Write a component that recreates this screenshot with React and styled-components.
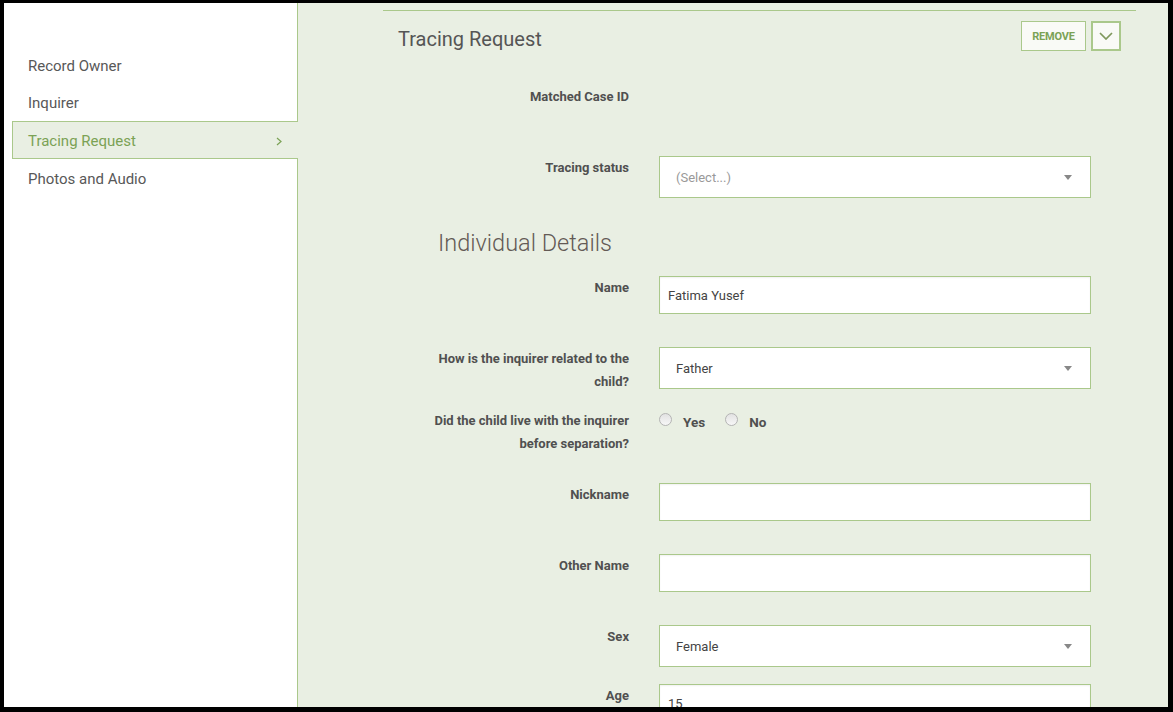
import React from "react";
import styled, { createGlobalStyle } from "styled-components";

const Global = createGlobalStyle`
  html, body { margin: 0; padding: 0; background: #000; }
  body { font-family: Roboto, "Noto Sans", Arial, sans-serif; }
  * { box-sizing: border-box; }
`;

const GREEN = "#aac88b";
const GREEN_TEXT = "#7ba255";
const BG = "#e9efe3";

const Frame = styled.div`
  width: 1173px;
  height: 712px;
  border-style: solid;
  border-color: #000;
  border-width: 3px 5px 5px 4px;
  display: flex;
  overflow: hidden;
  background: ${BG};
`;

const Sidebar = styled.nav`
  width: 294px;
  flex: none;
  background: #fff;
  border-right: 1px solid ${GREEN};
  padding: 43px 0 0 8px;
  display: flex;
  flex-direction: column;
`;

const NavItem = styled.div`
  height: ${(p) => (p.$first ? 37 : 38)}px;
  display: flex;
  align-items: center;
  justify-content: space-between;
  padding: 2px 16px 0 15px;
  font-size: 15px;
  color: ${(p) => (p.$active ? GREEN_TEXT : "#585858")};
  background: ${(p) => (p.$active ? BG : "transparent")};
  border: 1px solid ${(p) => (p.$active ? GREEN : "transparent")};
  border-right: none;
  margin-right: -1px;
`;

const Main = styled.main`
  flex: 1;
  padding: 7px 32px 0 85px;
  overflow: hidden;
`;

const Panel = styled.section`
  border-top: 1px solid ${GREEN};
`;

const Header = styled.div`
  display: flex;
  justify-content: space-between;
  align-items: flex-start;
  padding: 10px 15px 0 15px;
  height: 74px;
`;

const Title = styled.h2`
  margin: 3px 0 0;
  font-size: 20px;
  font-weight: 400;
  line-height: 30px;
  color: #555;
`;

const Actions = styled.div`
  display: flex;
  gap: 5px;
`;

const RemoveButton = styled.button`
  height: 30px;
  width: 65px;
  background: #f9faf6;
  border: 1px solid ${GREEN};
  color: ${GREEN_TEXT};
  font-family: Roboto, Arial, sans-serif;
  font-weight: 700;
  font-size: 11px;
  letter-spacing: -0.2px;
  padding: 0;
`;

const CollapseButton = styled.button`
  width: 30px;
  height: 30px;
  background: #f9faf6;
  border: 2px solid ${GREEN};
  display: flex;
  align-items: center;
  justify-content: center;
  padding: 0;
`;

const Row = styled.div`
  display: grid;
  grid-template-columns: 198px 432px;
  column-gap: 30px;
  padding-left: 48px;
  height: ${(p) => p.$h}px;
  align-items: start;
`;

const Label = styled.div`
  text-align: right;
  font-weight: 700;
  font-size: 13px;
  line-height: 23px;
  color: #505050;
`;

const TextBox = styled.div`
  height: 38px;
  background: #fff;
  border: 1px solid ${GREEN};
  box-shadow: inset 0 1px 2px rgba(0, 0, 0, 0.06);
  display: flex;
  align-items: center;
  padding: 0 8px;
  font-size: 13px;
  color: #444;
`;

const SelectBox = styled.div`
  height: 42px;
  background: #fff;
  border: 1px solid ${GREEN};
  display: flex;
  align-items: center;
  justify-content: space-between;
  padding: 0 18px 0 16px;
  font-size: 13px;
  color: ${(p) => (p.$placeholder ? "#999" : "#444")};
`;

const Caret = styled.span`
  width: 0;
  height: 0;
  border-left: 4px solid transparent;
  border-right: 4px solid transparent;
  border-top: 5px solid #888;
`;

const SectionHeading = styled.h3`
  margin: 0 0 0 55px;
  height: 49px;
  font-size: 23.5px;
  font-weight: 300;
  line-height: 32px;
  color: #635a55;
`;

const RadioGroup = styled.div`
  display: flex;
  align-items: center;
  height: 23px;
  gap: 20px;
`;

const RadioOption = styled.label`
  display: flex;
  align-items: center;
  gap: 11px;
  font-size: 13.5px;
  font-weight: 700;
  color: #505050;
  padding-top: 3px;
`;

const RadioCircle = styled.span`
  width: 13px;
  height: 13px;
  border-radius: 50%;
  border: 1px solid #b4b4b4;
  background: linear-gradient(#e2e2e2, #f7f7f7);
  margin-top: -6px;
`;

const fields = [
  { type: "empty", label: "Matched Case ID", h: 71 },
  { type: "select", label: "Tracing status", value: "(Select...)", placeholder: true, h: 71 },
  { type: "heading", label: "Individual Details" },
  { type: "text", label: "Name", value: "Fatima Yusef", h: 71 },
  { type: "select", label: "How is the inquirer related to the child?", value: "Father", h: 62 },
  { type: "radio", label: "Did the child live with the inquirer before separation?", options: ["Yes", "No"], h: 74 },
  { type: "text", label: "Nickname", value: "", h: 71 },
  { type: "text", label: "Other Name", value: "", h: 71 },
  { type: "select", label: "Sex", value: "Female", h: 59 },
  { type: "text", label: "Age", value: "15", h: 60 },
];

function Control({ f }) {
  if (f.type === "text") return <TextBox>{f.value}</TextBox>;
  if (f.type === "select")
    return (
      <SelectBox $placeholder={f.placeholder}>
        <span>{f.value}</span>
        <Caret />
      </SelectBox>
    );
  if (f.type === "radio")
    return (
      <RadioGroup>
        {f.options.map((o) => (
          <RadioOption key={o}>
            <RadioCircle />
            {o}
          </RadioOption>
        ))}
      </RadioGroup>
    );
  return <div />;
}

export default function App() {
  return (
    <>
      <Global />
      <Frame>
        <Sidebar>
          <NavItem $first>Record Owner</NavItem>
          <NavItem>Inquirer</NavItem>
          <NavItem $active>
            Tracing Request
            <svg width="6" height="9" viewBox="0 0 6 9">
              <path d="M1 1 L5 4.5 L1 8" fill="none" stroke={GREEN_TEXT} strokeWidth="1.2" />
            </svg>
          </NavItem>
          <NavItem>Photos and Audio</NavItem>
        </Sidebar>
        <Main>
          <Panel>
            <Header>
              <Title>Tracing Request</Title>
              <Actions>
                <RemoveButton>REMOVE</RemoveButton>
                <CollapseButton>
                  <svg width="14" height="8" viewBox="0 0 14 8">
                    <path d="M1 1 L7 7 L13 1" fill="none" stroke="#7f985c" strokeWidth="1.7" />
                  </svg>
                </CollapseButton>
              </Actions>
            </Header>
            {fields.map((f) =>
              f.type === "heading" ? (
                <SectionHeading key={f.label}>{f.label}</SectionHeading>
              ) : (
                <Row key={f.label} $h={f.h}>
                  <Label>{f.label}</Label>
                  <Control f={f} />
                </Row>
              )
            )}
          </Panel>
        </Main>
      </Frame>
    </>
  );
}
